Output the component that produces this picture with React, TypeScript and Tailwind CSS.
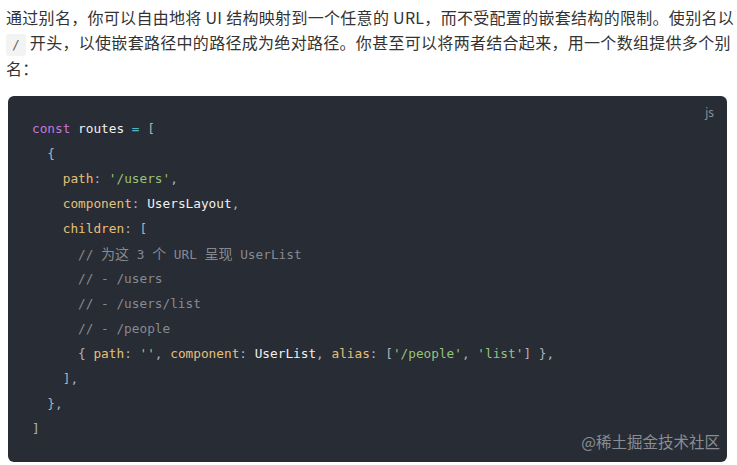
import React from "react";

const K = ({ children }: { children: React.ReactNode }) => <span className="text-[#e5c07b]">{children}</span>;
const S = ({ children }: { children: React.ReactNode }) => <span className="text-[#98c379]">{children}</span>;
const P = ({ children }: { children: React.ReactNode }) => <span className="text-[#abb2bf]">{children}</span>;
const C = ({ children }: { children: React.ReactNode }) => <span className="text-[#868a92]">{children}</span>;
const Z = ({ children }: { children: React.ReactNode }) => (
  <span className="text-[14px] [font-family:'Noto_Sans_CJK_SC',sans-serif]">{children}</span>
);

export default function App() {
  const lines: React.ReactNode[] = [
    <>
      <span className="text-[#c678dd]">const</span> <span className="text-[#f0f0f0]">routes</span>{" "}
      <span className="text-[#56b6c2]">=</span> <P>[</P>
    </>,
    <>
      {"  "}
      <P>{"{"}</P>
    </>,
    <>
      {"    "}
      <K>path</K>
      <P>: </P>
      <S>'/users'</S>
      <P>,</P>
    </>,
    <>
      {"    "}
      <K>component</K>
      <P>: </P>
      <span className="text-[#f0f0f0]">UsersLayout</span>
      <P>,</P>
    </>,
    <>
      {"    "}
      <K>children</K>
      <P>: [</P>
    </>,
    <>
      {"      "}
      <C>
        // <Z>为这</Z> 3 <Z>个</Z> URL <Z>呈现</Z> UserList
      </C>
    </>,
    <>
      {"      "}
      <C>// - /users</C>
    </>,
    <>
      {"      "}
      <C>// - /users/list</C>
    </>,
    <>
      {"      "}
      <C>// - /people</C>
    </>,
    <>
      {"      "}
      <P>{"{ "}</P>
      <K>path</K>
      <P>: </P>
      <S>''</S>
      <P>, </P>
      <K>component</K>
      <P>: </P>
      <span className="text-[#f0f0f0]">UserList</span>
      <P>, </P>
      <K>alias</K>
      <P>: [</P>
      <S>'/people'</S>
      <P>, </P>
      <S>'list'</S>
      <P>{"] },"}</P>
    </>,
    <>
      {"    "}
      <P>],</P>
    </>,
    <>
      {"  "}
      <P>{"},"}</P>
    </>,
    <>
      <P>]</P>
    </>,
  ];

  return (
    <div className="w-[737px] h-[465px] overflow-hidden bg-white pl-[8px] pr-[10px] pt-[5px] [font-family:'Noto_Sans_CJK_SC',sans-serif]">
      <p className="text-[16px] tracking-[0.3px] leading-[25px] text-[#333333] -ml-[2px] whitespace-nowrap">
        通过别名，你可以自由地将 UI 结构映射到一个任意的 URL，而不受配置的嵌套结构的限制。使别名以
        <br />
        <code className="inline-block h-[22px] leading-[22px] align-middle px-[6px] rounded-[3px] bg-[#f3f3f4] text-[#666] text-[13px] tracking-normal [font-family:'DejaVu_Sans_Mono',monospace] mr-[4px]">
          /
        </code>
        开头，以使嵌套路径中的路径成为绝对路径。你甚至可以将两者结合起来，用一个数组提供多个别
        <br />
        名：
      </p>
      <div className="relative mt-[15px] rounded-[6px] bg-[#282c34] pt-[20px] pb-[21px] pl-[24px]">
        <span className="absolute top-[9px] right-[13px] text-[12px] leading-[16px] text-[#8b8f96] [font-family:'Noto_Sans',sans-serif]">
          js
        </span>
        <pre className="m-0 text-[12.75px] leading-[25px] text-[#abb2bf] [font-family:'DejaVu_Sans_Mono','Noto_Sans_CJK_SC',monospace]">
          {lines.map((l, i) => (
            <div key={i} className="h-[25px]">
              {l}
            </div>
          ))}
        </pre>
        <span className="absolute bottom-[11px] right-[7px] text-[15.5px] leading-[20px] text-[#8a8d93] [font-family:'Noto_Sans_CJK_SC',sans-serif]">
          @稀土掘金技术社区
        </span>
      </div>
    </div>
  );
}
